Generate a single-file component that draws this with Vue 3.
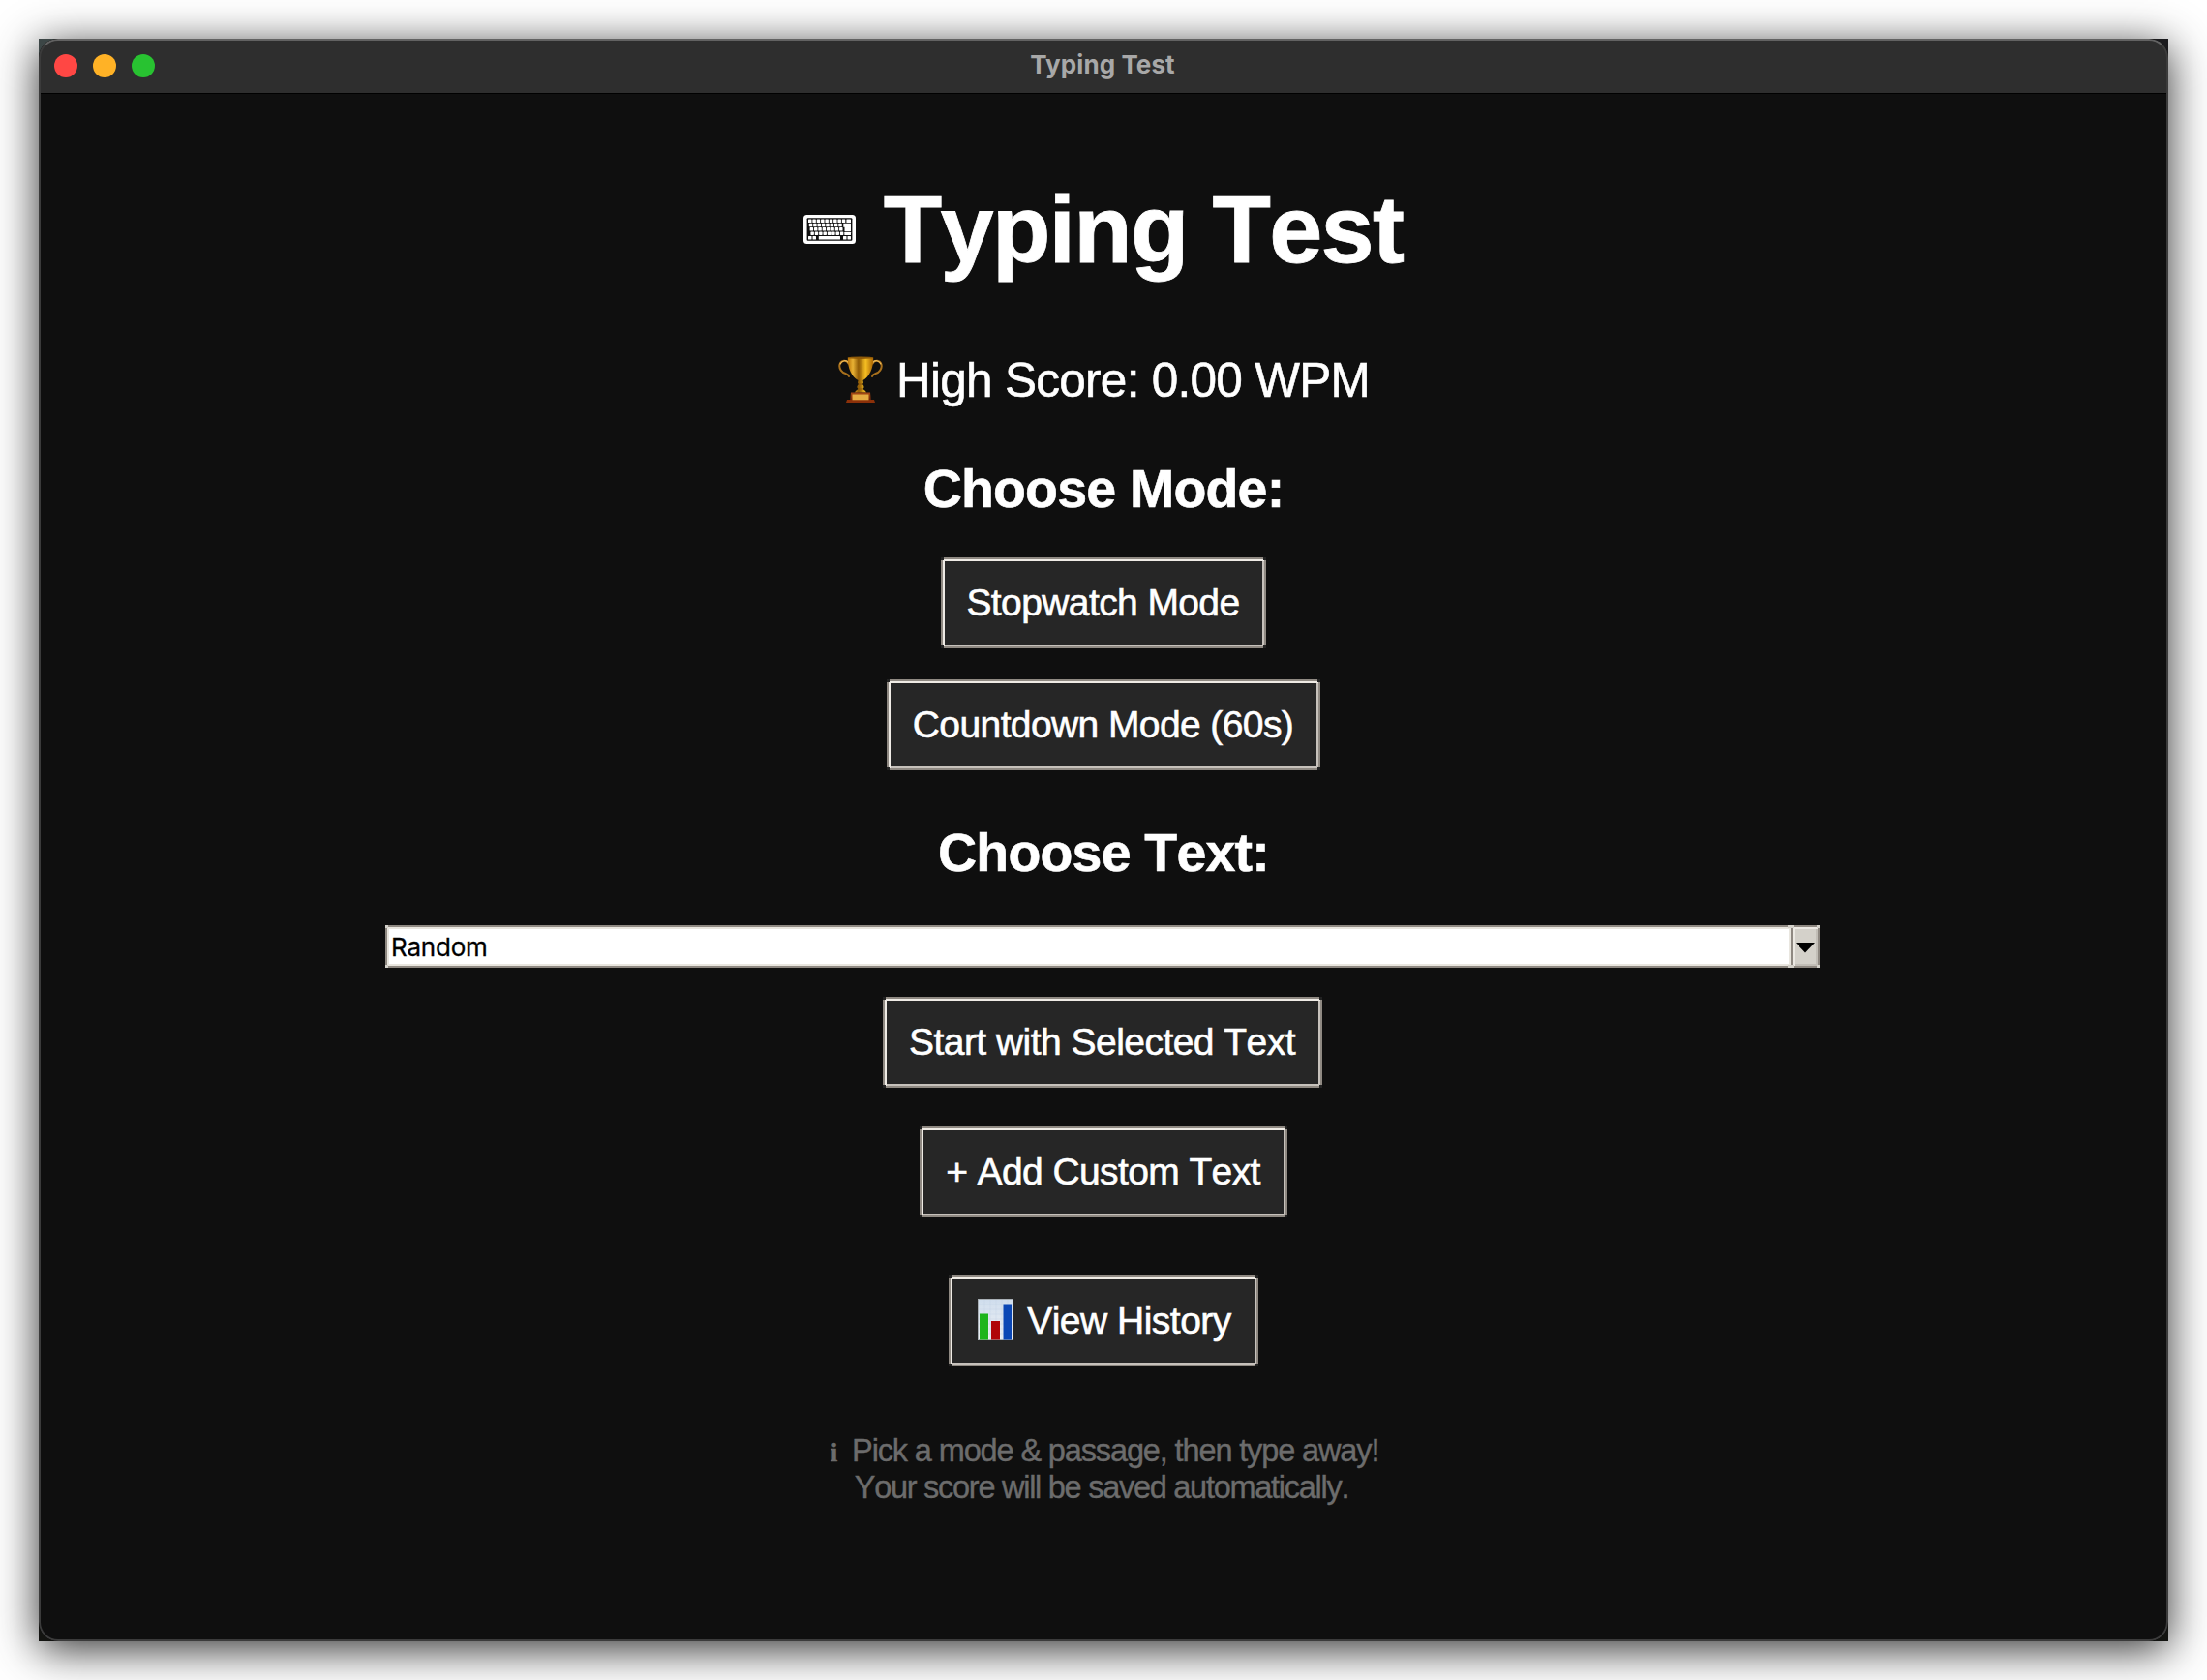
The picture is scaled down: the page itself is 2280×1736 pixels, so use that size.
<script setup>
import { ref } from 'vue'

const selectedText = ref('Random')
const keyRows = [0, 1, 2, 3]
</script>

<template>
  <div class="desktop">
    <div class="backing">
      <main class="window">
        <header class="titlebar">
          <div class="lights">
            <span class="light close"></span>
            <span class="light minimise"></span>
            <span class="light zoom"></span>
          </div>
          <span class="caption">Typing Test</span>
        </header>

        <section class="content">
          <h1 class="title">
            <svg class="keyboard" viewBox="0 0 54 30" width="54" height="30">
              <rect width="54" height="30" rx="3.500" fill="#fff" />
              <rect x="3.600" y="3.300" width="46.800" height="23.400" rx="1" fill="#0f0f0f" />
              <g v-for="r in keyRows" :key="r" fill="#fff">
                <rect
                  v-for="c in (r === 0 ? 9 : 8)"
                  :key="c"
                  :x="5 + (c - 1) * 4.35 + r * 0.8"
                  :y="4.5 + r * 4.3"
                  width="3.500"
                  height="3.500"
                  rx=".6"
                />
              </g>
              <g fill="#fff">
                <rect x="44.400" y="4.500" width="4.600" height="3.500" rx=".5" />
                <path d="M41.300 8.800H49v8.200h-6.500v-4.200h-1.200z" />
                <rect x="42.300" y="17.700" width="6.700" height="3.300" rx=".5" />
                <rect x="5" y="22" width="3.500" height="3.500" rx=".5" />
                <rect x="9.500" y="22" width="3.500" height="3.500" rx=".5" />
                <rect x="15.800" y="22" width="22.200" height="3.500" rx=".5" />
                <rect x="41" y="22" width="3.500" height="3.500" rx=".5" />
                <rect x="45.500" y="22" width="3.500" height="3.500" rx=".5" />
              </g>
            </svg>
            <span>Typing Test</span>
          </h1>

          <p class="score">
            <svg class="trophy" viewBox="0 0 46 48" width="46" height="48">
              <defs>
                <linearGradient id="cup" x1="0" x2="1" y1="0" y2="0">
                  <stop offset="0" stop-color="#b87206" />
                  <stop offset=".2" stop-color="#e9b234" />
                  <stop offset=".42" stop-color="#8f5a05" />
                  <stop offset=".7" stop-color="#f5be22" />
                  <stop offset="1" stop-color="#a86302" />
                </linearGradient>
                <linearGradient id="base" x1="0" x2="0" y1="0" y2="1">
                  <stop offset="0" stop-color="#a54a16" />
                  <stop offset="1" stop-color="#6f2205" />
                </linearGradient>
              </defs>
              <g fill="none" stroke-linecap="round">
                <path d="M10.500 7.500C8.500 3.500 3 4 1.500 8.500c-1.200 4.500 2.500 8.500 6 9.500 2 .6 3 1.200 3.500 3M35.500 7.500c2-4 7.500-3.500 9 1 1.200 4.500-2.500 8.500-6 9.500-2 .6-3 1.200-3.500 3" stroke="#a8701c" stroke-width="2" />
                <path d="M10.500 6.800C8.500 3.500 3.500 4.200 2 8M35.500 6.800c2-3.300 7-2.600 8.500 1.200" stroke="#f0bd5a" stroke-width="1.200" />
              </g>
              <path d="M9.800 1.500C9.600 13 14 21.500 20.500 25l-.5 2.500 1 1.500c-.8 1-1.800 2-1.500 3.500l1 1.500c-1.200 1-3 2-3.500 3.500h12c-.5-1.500-2.300-2.500-3.500-3.500l1-1.500c.3-1.500-.7-2.500-1.500-3.500l1-1.500-.5-2.500C32 21.500 36.400 13 36.200 1.500z" fill="url(#cup)" />
              <ellipse cx="23" cy="1.700" rx="13.200" ry="1.200" fill="#8f5a08" />
              <path d="M20.500 29h5M20.500 34h5" stroke="#8a5204" stroke-width=".9" />
              <path d="M13 37.500h20l.8 8H12.200z" fill="url(#base)" />
              <path d="M9 45h28l1 3H8z" fill="#8b3009" />
              <rect x="14.500" y="39.500" width="17" height="5.800" fill="#e5ac42" />
            </svg>
            <span>High Score: 0.00 WPM</span>
          </p>

          <h2 class="heading">Choose Mode:</h2>
          <button class="btn stopwatch"><span>Stopwatch Mode</span></button>
          <button class="btn countdown"><span>Countdown Mode (60s)</span></button>

          <h2 class="heading text-heading">Choose Text:</h2>
          <div class="combo">
            <div class="field">{{ selectedText }}</div>
            <div class="arrow">
              <svg viewBox="0 0 20 11" width="20" height="11"><path d="M0 0h20L10 10.500z" fill="#000" /></svg>
            </div>
          </div>

          <button class="btn start"><span>Start with Selected Text</span></button>
          <button class="btn add"><span>+ Add Custom Text</span></button>
          <button class="btn history">
            <svg class="chart" viewBox="0 0 37 43" width="37" height="43">
              <defs>
                <linearGradient id="paper" x1="0" x2="0" y1="0" y2="1">
                  <stop offset="0" stop-color="#cfdded" />
                  <stop offset="1" stop-color="#f1f3f5" />
                </linearGradient>
              </defs>
              <rect x=".5" y=".5" width="36" height="42" fill="url(#paper)" stroke="#a9b0b6" />
              <path d="M1 6h35M1 11h35M1 16h35M1 21h35M1 26h35M1 31h35M1 36h35M7 1v41M13 1v41M19 1v41M25 1v41M31 1v41" stroke="#c3d1e2" stroke-width=".4" />
              <rect x="2" y="15.500" width="9" height="27" fill="#1db51c" />
              <rect x="14" y="23" width="9" height="19.500" fill="#b00508" />
              <rect x="26.500" y="5.500" width="8.500" height="37" fill="#0b47b5" />
            </svg>
            <span>View History</span>
          </button>

          <p class="hint">
            <span class="line"><i class="info">i</i><span>Pick a mode &amp; passage, then type away!</span></span>
            <span class="line second">Your score will be saved automatically.</span>
          </p>
        </section>
      </main>
    </div>
  </div>
</template>

<style>
body {
  background: #fff;
}
</style>

<style scoped>
.desktop {
  box-sizing: border-box;
  width: 2280px;
  height: 1736px;
  padding: 40px;
  overflow: hidden;
  background: #fff;
}

.backing {
  width: 2200px;
  height: 1656px;
  background:
    linear-gradient(#3c4646, #3c4646) left top / 30px 30px no-repeat,
    linear-gradient(#1b1b1e, #1b1b1e) right top / 30px 30px no-repeat,
    #131411;
  box-shadow: 0 8px 42px rgba(0, 0, 0, 0.82);
}

.window {
  position: relative;
  width: 2200px;
  height: 1656px;
  border-radius: 20px;
  overflow: hidden;
  background: #0f0f0f;
  font-family: "Liberation Sans", Arial, Helvetica, sans-serif;
  color: #fff;
}

.window::after {
  content: "";
  position: absolute;
  inset: 0;
  box-sizing: border-box;
  border: 2px solid #3b3b3b;
  border-top-color: #626262;
  border-radius: 20px;
  pointer-events: none;
}

.titlebar {
  box-sizing: border-box;
  height: 57px;
  display: grid;
  grid-template-columns: 1fr auto 1fr;
  align-items: center;
  padding: 0 16px;
  background: #2e2e2e;
  border-bottom: 1px solid #000;
}

.lights {
  display: flex;
  gap: 16px;
}

.light {
  width: 24px;
  height: 24px;
  border-radius: 50%;
}

.close { background: #ff4744; }
.minimise { background: #ffb226; }
.zoom { background: #28c231; }

.caption {
  margin: -3px 2px 0 0;
  font: 700 26px/32px Inter, sans-serif;
  letter-spacing: 0.08px;
  color: #a8a8a8;
}

.content {
  display: flex;
  flex-direction: column;
  align-items: center;
}

.title,
.heading,
.score,
.hint {
  margin: 0;
  white-space: nowrap;
  font-kerning: none;
}

.title {
  display: flex;
  align-items: center;
  gap: 28px;
  margin-top: 80px;
  font-size: 99px;
  line-height: 120px;
  letter-spacing: -1.75px;
  -webkit-text-stroke: 0.8px #fff;
}

.keyboard {
  margin: -1px 1px 0 -1px;
}

.score {
  display: flex;
  align-items: center;
  gap: 14px;
  margin-top: 66px;
  padding-left: 1px;
  font-size: 49.5px;
  line-height: 60px;
  letter-spacing: -0.72px;
  -webkit-text-stroke: 0.6px #fff;
}

.trophy {
  margin-top: -2px;
}

.heading {
  margin-top: 52px;
  font-size: 55.5px;
  line-height: 60px;
  letter-spacing: -0.8px;
  -webkit-text-stroke: 0.6px #fff;
}

.text-heading {
  margin-top: 55px;
}

.btn {
  position: relative;
  box-sizing: border-box;
  display: flex;
  align-items: center;
  justify-content: center;
  height: 94px;
  margin: 0;
  padding: 0 1px 0 0;
  border: 2px solid #8f8982;
  border-radius: 0;
  background: #262626;
  box-shadow: inset 2px 2px #efebe5, inset -2px -2px #c6c1bb;
  color: #fff;
  font: 39px/46px "Liberation Sans", Arial, sans-serif;
  font-kerning: none;
  letter-spacing: -0.6px;
  white-space: nowrap;
  -webkit-text-stroke: 0.6px #fff;
}

.btn::before {
  content: "";
  position: absolute;
  inset: -2px;
  background:
    linear-gradient(#222, #222) left top / 3px 3px no-repeat,
    linear-gradient(#222, #222) right top / 3px 3px no-repeat,
    linear-gradient(#222, #222) left bottom / 3px 3px no-repeat,
    linear-gradient(#222, #222) right bottom / 3px 3px no-repeat;
}

.stopwatch { width: 336px; margin-top: 41px; }
.countdown { width: 448px; margin-top: 32px; }
.start { width: 454px; margin: 30px 2px 0 0; letter-spacing: -0.53px; }
.add { width: 380px; margin-top: 40px; }
.history { width: 320px; margin-top: 60px; padding: 0 0 0 2px; gap: 14px; letter-spacing: -0.5px; }

.chart {
  margin-top: -3px;
}

.combo {
  display: flex;
  width: 1482px;
  height: 44px;
  margin: 45px 2px 0 0;
}

.field,
.arrow {
  position: relative;
  box-sizing: border-box;
  border: 2px solid #8f8982;
  box-shadow: inset 0 0 0 2px #e9e6df;
}

.field {
  flex: 1;
  padding: 1px 0 0 4px;
  border-right: 0;
  background: #fff;
  color: #000;
  font: 26px/40px Inter, sans-serif;
  letter-spacing: -0.2px;
  -webkit-text-stroke: 0.3px #000;
}

.arrow {
  width: 30px;
  display: flex;
  align-items: center;
  justify-content: center;
  padding-top: 2px;
  background: #d4d1ca;
  box-shadow: inset 2px 2px #ece9e3, inset -2px -2px #c2beb7;
}

.field::before,
.arrow::before {
  content: "";
  position: absolute;
  inset: -2px;
  background:
    linear-gradient(#d4d1ca, #d4d1ca) left top / 3px 3px no-repeat,
    linear-gradient(#d4d1ca, #d4d1ca) left bottom / 3px 3px no-repeat,
    linear-gradient(#d4d1ca, #d4d1ca) right top / 3px 3px no-repeat,
    linear-gradient(#d4d1ca, #d4d1ca) right bottom / 3px 3px no-repeat;
}

.field::before {
  right: 0;
}

.hint {
  display: flex;
  flex-direction: column;
  align-items: center;
  margin-top: 68px;
  font-size: 32.5px;
  line-height: 38px;
  letter-spacing: -1.13px;
  color: #6c6c6c;
  -webkit-text-stroke: 0.4px #6c6c6c;
}

.line {
  display: flex;
  align-items: baseline;
  gap: 16px;
  height: 38px;
  margin-left: 2px;
}

.second {
  margin: 0 4px 0 0;
  letter-spacing: -1.27px;
}

.info {
  font: 700 27px/36px "Liberation Serif", serif;
}
</style>
